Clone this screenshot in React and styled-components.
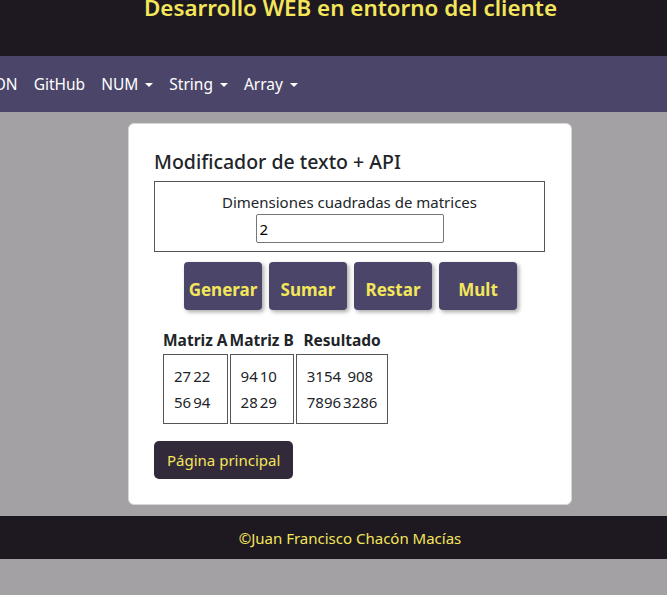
import React from 'react';
import styled, { createGlobalStyle } from 'styled-components';

const GlobalStyle = createGlobalStyle`
	html, body {
		margin: 0;
		padding: 0;
		background: #a3a1a4;
		font-family: 'Noto Sans', 'Open Sans', sans-serif;
		overflow: hidden;
	}
`;

const Page = styled.div`
	width: 667px;
	height: 595px;
	overflow: hidden;
	background: #a3a1a4;
`;

const Header = styled.header`
	background: #1e1820;
	height: 56px;
	display: flex;
	justify-content: center;
	padding-left: 34px;
	overflow: hidden;
	& h1 {
		margin: -8px 0 0;
		color: #f3e65a;
		font-size: 22.4px;
		font-weight: 600;
		line-height: 32px;
		white-space: nowrap;
	}
`;

const Nav = styled.nav`
	background: #4b4669;
	height: 56px;
	display: flex;
	align-items: center;
	gap: 16px;
	overflow: hidden;
`;

const NavItem = styled.span`
	color: #fff;
	font-size: 15.5px;
	white-space: nowrap;
	margin-left: ${({ $shift }) => $shift || '0'};
	&::after {
		content: ${({ $drop }) => ($drop ? "''" : 'none')};
		display: inline-block;
		margin-left: 7px;
		vertical-align: 3px;
		border-top: 4px solid #fff;
		border-left: 4px solid transparent;
		border-right: 4px solid transparent;
	}
`;

const Main = styled.main`
	display: flex;
	justify-content: center;
	padding: 11px 0 11px 33px;
`;

const Card = styled.section`
	width: 444px;
	box-sizing: border-box;
	background: #fff;
	border: 1px solid #d6d6d6;
	border-radius: 6px;
	padding: 26px 26px 25px 25px;
`;

const Title = styled.h2`
	margin: 0 0 7px;
	font-size: 19.5px;
	font-weight: 500;
	color: #212529;
	line-height: 24px;
`;

const DimBox = styled.div`
	border: 1px solid #555;
	width: 391px;
	box-sizing: border-box;
	padding: 10px 0 8px;
	display: flex;
	flex-direction: column;
	align-items: center;
	& label {
		font-size: 15px;
		color: #212529;
		line-height: 20px;
	}
	& input {
		margin-top: 2px;
		width: 188px;
		height: 29px;
		box-sizing: border-box;
		border: 1px solid #767676;
		border-radius: 2px;
		font: inherit;
		font-size: 15px;
		padding: 0 3px;
		color: #000;
	}
`;

const ButtonRow = styled.div`
	display: flex;
	justify-content: center;
	gap: 7px;
	margin: 10px 0 0 1px;
	width: 391px;
`;

const OpButton = styled.button`
	width: 78px;
	height: 48px;
	background: #4b4669;
	color: #f3e65a;
	border: none;
	border-radius: 4px;
	font-family: inherit;
	font-size: 17px;
	font-weight: 700;
	box-shadow: 2px 2px 4px rgba(0, 0, 0, 0.35);
	padding: 0;
	padding-top: 6px;
`;

const Matrices = styled.table`
	margin: 20px 0 0 7px;
	border-spacing: 2px 0;
	& th {
		font-size: 15.5px;
		font-weight: 700;
		color: #212529;
		padding: 0 0 4px;
		white-space: nowrap;
		line-height: 20px;
	}
`;

const MatrixCell = styled.td`
	border: 1px solid #555;
	height: 70px;
	box-sizing: border-box;
	padding: 0 9px;
	vertical-align: middle;
	& table {
		border-collapse: collapse;
	}
	& td {
		font-size: 15px;
		color: #212529;
		padding: 2px 1px;
		text-align: center;
		line-height: 22px;
	}
`;

const HomeButton = styled.button`
	margin-top: 17px;
	background: #322a3a;
	color: #f3e65a;
	border: none;
	border-radius: 5px;
	font-family: inherit;
	font-size: 15px;
	height: 38px;
	padding: 0 13px;
`;

const Footer = styled.footer`
	background: #1e1820;
	height: 43px;
	display: flex;
	align-items: center;
	justify-content: center;
	padding-left: 33px;
	color: #f3e65a;
	font-size: 15px;
`;

const Matrix = ({ rows }) => (
	<table>
		<tbody>
			{rows.map((r, i) => (
				<tr key={i}>
					{r.map((v, j) => (
						<td key={j}>{v}</td>
					))}
				</tr>
			))}
		</tbody>
	</table>
);

export default function App() {
	return (
		<Page>
			<GlobalStyle />
			<Header>
				<h1>Desarrollo WEB en entorno del cliente</h1>
			</Header>
			<Nav>
				<NavItem $shift='-19px'>JSON</NavItem>
				<NavItem>GitHub</NavItem>
				<NavItem $drop>NUM</NavItem>
				<NavItem $drop>String</NavItem>
				<NavItem $drop>Array</NavItem>
			</Nav>
			<Main>
				<Card>
					<Title>Modificador de texto + API</Title>
					<DimBox>
						<label>Dimensiones cuadradas de matrices</label>
						<input type='text' defaultValue='2' />
					</DimBox>
					<ButtonRow>
						<OpButton>Generar</OpButton>
						<OpButton>Sumar</OpButton>
						<OpButton>Restar</OpButton>
						<OpButton>Mult</OpButton>
					</ButtonRow>
					<Matrices>
						<thead>
							<tr>
								<th>Matriz A</th>
								<th>Matriz B</th>
								<th>Resultado</th>
							</tr>
						</thead>
						<tbody>
							<tr>
								<MatrixCell>
									<Matrix rows={[['27', '22'], ['56', '94']]} />
								</MatrixCell>
								<MatrixCell>
									<Matrix rows={[['94', '10'], ['28', '29']]} />
								</MatrixCell>
								<MatrixCell>
									<Matrix rows={[['3154', '908'], ['7896', '3286']]} />
								</MatrixCell>
							</tr>
						</tbody>
					</Matrices>
					<HomeButton>Página principal</HomeButton>
				</Card>
			</Main>
			<Footer>©Juan Francisco Chacón Macías</Footer>
		</Page>
	);
}
